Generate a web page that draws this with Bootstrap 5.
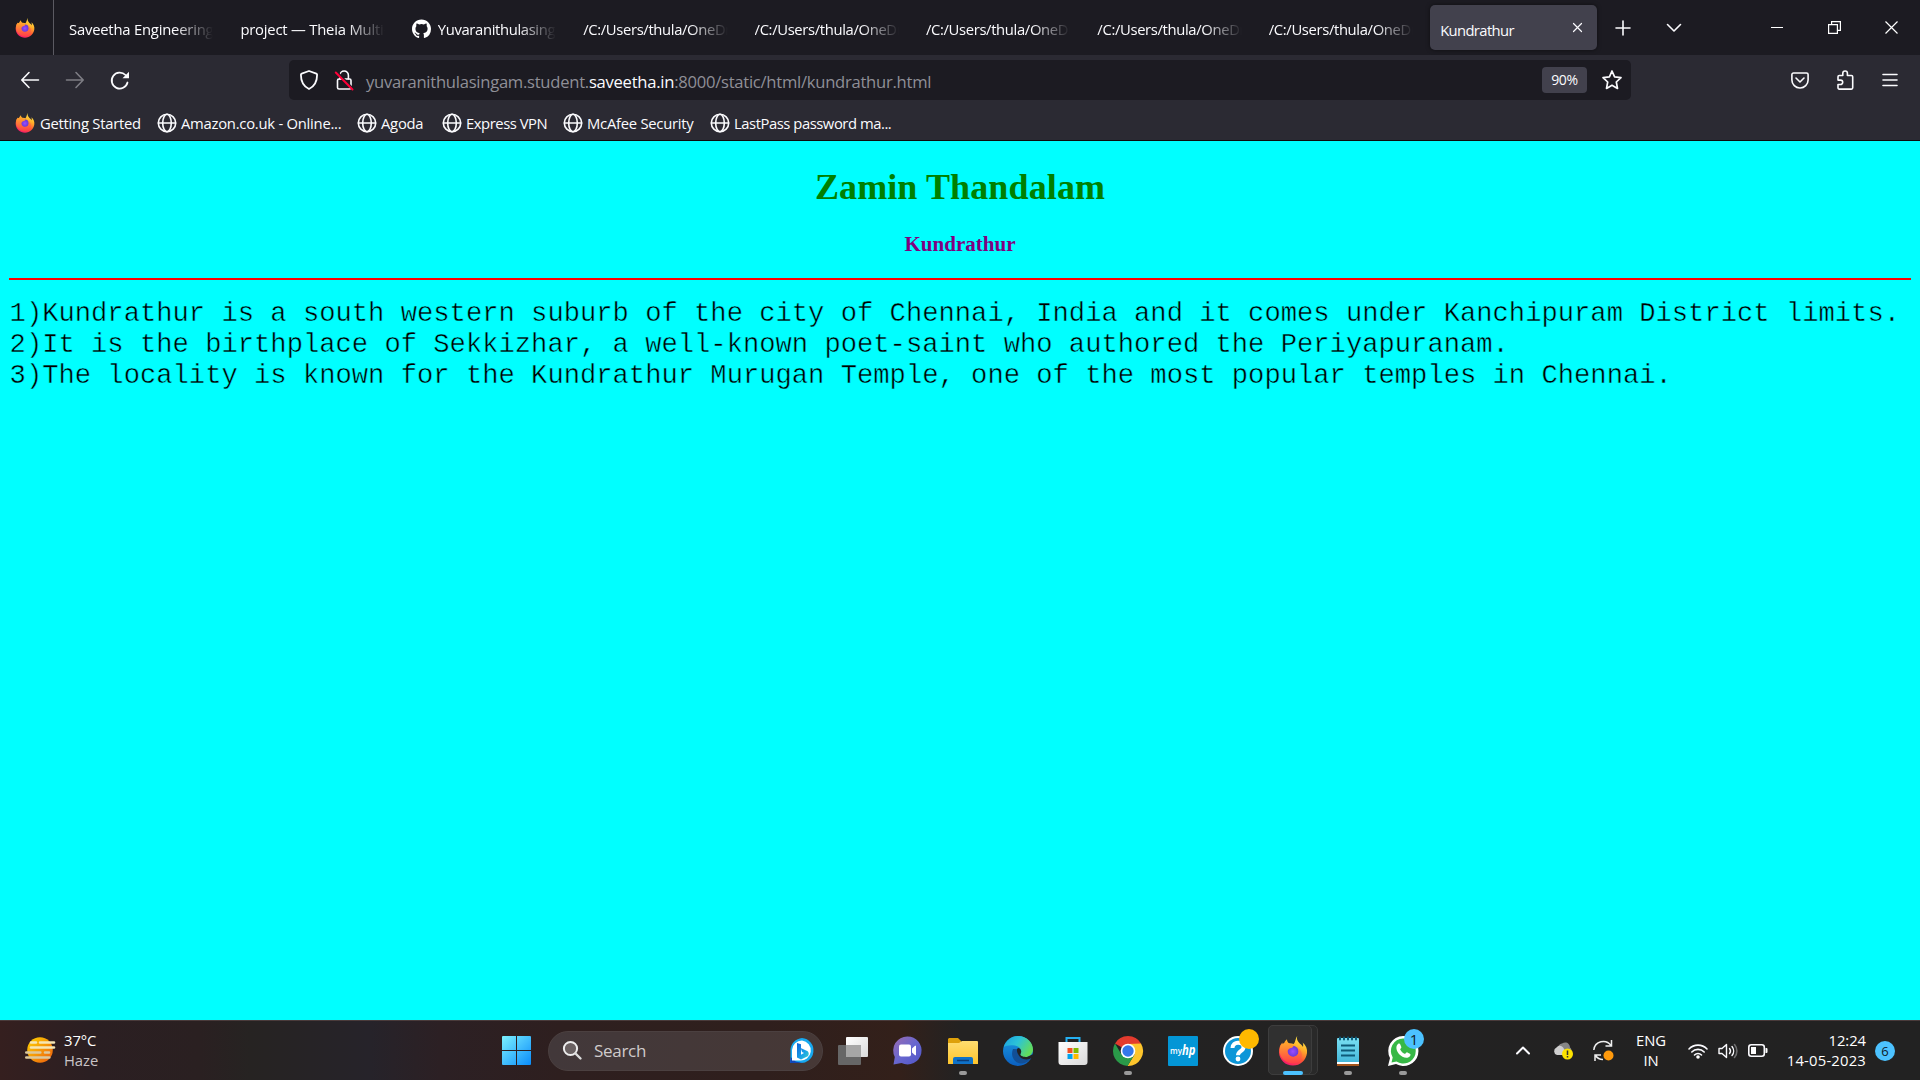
<!DOCTYPE html>
<html lang="en">
<head>
<meta charset="utf-8">
<title>Kundrathur</title>
<link href="https://cdn.jsdelivr.net/npm/bootstrap@5.3.0/dist/css/bootstrap.min.css" rel="stylesheet">
<style>
body{width:1920px;height:1080px;overflow:hidden;font-family:"Open Sans","Noto Sans",sans-serif;font-size:14.8px;line-height:20px;color:#fbfbfe}
svg{display:block;flex:none;overflow:visible}
.ln{fill:none;stroke:#fbfbfe;stroke-width:1.6;stroke-linecap:round;stroke-linejoin:round}
.tabstrip{height:55px;background:#1c1b22}
.pinned{width:54px;border-right:1px solid #5b5a62;padding-left:15px}
.tabs-row{padding-left:5px}
.tab-item{width:171.4px;padding:2px 17px 0 10px}
.tab-text{overflow:hidden;white-space:nowrap;letter-spacing:-.35px;-webkit-mask-image:linear-gradient(90deg,#000 calc(100% - 38px),transparent);mask-image:linear-gradient(90deg,#000 calc(100% - 38px),transparent)}
.tab-wide{letter-spacing:-.2px}
.tab-on{width:167px;height:45px;background:#42414d;border-radius:5px;padding:0 15px 0 10px;box-shadow:0 0 4px rgba(0,0,0,.5);letter-spacing:-.63px}
.toolbar{height:50px;background:#2b2a33}
.urlbar{width:1342px;height:40px;background:#1c1b22;border-radius:5px;padding:0 9px 0 11px}
.url{font-size:16.6px;color:#8f8f97;letter-spacing:-.26px;white-space:nowrap;padding-top:3px}
.url b{font-weight:400;color:#fbfbfe}
.zoomlvl{width:45px;height:26px;background:#42414d;border-radius:4px;font-size:14px;letter-spacing:-.3px;margin-right:2px}
.bookmarks{height:36px;background:#2b2a33;border-bottom:1px solid #0c0c0d;padding:1px 0 0 15px}
.bm{white-space:nowrap;letter-spacing:-.25px}
.bm-tight{letter-spacing:-.45px}
.page{height:879px;background:#0ff;color:#000;padding:0 9px;font-family:"Liberation Serif",serif}
.page h1{font-size:36px;line-height:42px;font-weight:700;color:green;margin:0;padding-top:25px;letter-spacing:.12px}
.page h3{font-size:21.06px;line-height:24px;font-weight:700;color:purple;margin:0;padding-top:24px}
.rule{height:2px;background:red;margin-top:22px}
.facts{font-family:"Liberation Mono",monospace;font-size:27.17px;line-height:31px;margin:18px 0 0 .6px;white-space:nowrap;-webkit-text-stroke:.45px #0ff}
.taskbar{height:60px;border-top:1px solid #4a3b3b;background:linear-gradient(90deg,#351f1f 0,#2b1f22 90px,#2a2021 200px,#262322 250px,#26232a 370px,#2c2024 440px,#2e1f1f 560px,#2f1f1d 760px,#33201a 900px,#232222 960px,#222 100%)}
.search{width:275px;height:40px;border-radius:20px;background:linear-gradient(90deg,#42383a,#463836);border:1px solid #4b4040;font-size:17px;letter-spacing:-.3px;color:#d0cbcb;padding:0 7px 0 14px}
.app{width:55px;height:59px}
.app::after{content:"";position:absolute;bottom:5px;width:8px;height:4px;border-radius:2px;background:transparent}
.run::after{background:#9a9a9a}
.live::after{width:20px;background:#4cc2ff}
.live-bg{left:3px;top:4px;width:50px;height:50px;border-radius:5px;background:#292929;border:1px solid #3a3a3a}
.live-fg{left:3px;top:4px;width:44px;height:50px;border-radius:5px;background:#303030;border:1px solid #3d3d3d}
.note{right:6px;top:8px;width:20px;height:20px;border-radius:50%;background:#4cc2ff;color:#10202a;font-size:15px}
.note-amber{background:#ffb900}
.task-text{font-size:14.8px;line-height:20px;letter-spacing:-.05px;color:#fff;margin-top:-2px}
.dimmed{color:#c9c4c6}
.myhp{font-family:"Open Sans",sans-serif;fill:#fff}
.alerts{width:20px;height:20px;background:#4cc2ff;color:#10202a;font-size:13px;margin:0 25px 0 9px}
</style>
</head>
<body class="d-flex flex-column">
<svg width="0" height="0" class="position-absolute">
<defs>
<linearGradient id="fxo" x1=".8" y1="0" x2=".3" y2="1"><stop offset="0" stop-color="#fff44f"/><stop offset=".35" stop-color="#ffb02a"/><stop offset=".65" stop-color="#ff5634"/><stop offset="1" stop-color="#f4156f"/></linearGradient>
<linearGradient id="fxl" x1="0" y1="0" x2="0" y2="1"><stop offset="0" stop-color="#ffa52c"/><stop offset="1" stop-color="#ff3d4a"/></linearGradient>
<radialGradient id="fxp"><stop offset="0" stop-color="#9a4dff"/><stop offset="1" stop-color="#6437d6"/></radialGradient>
<linearGradient id="win" gradientUnits="userSpaceOnUse" x1="0" y1="0" x2="29" y2="29"><stop offset="0" stop-color="#7cf1ff"/><stop offset="1" stop-color="#0a8cfa"/></linearGradient>
<linearGradient id="sun" x1="0" y1="0" x2="1" y2="1"><stop offset="0" stop-color="#ffd500"/><stop offset="1" stop-color="#ec5a0e"/></linearGradient>
<linearGradient id="chat" x1="0" y1="0" x2="1" y2="1"><stop offset="0" stop-color="#9b6bb0"/><stop offset=".5" stop-color="#6867cf"/><stop offset="1" stop-color="#4f55c8"/></linearGradient>
<linearGradient id="fold" x1="0" y1="0" x2="0" y2="1"><stop offset="0" stop-color="#ffdd70"/><stop offset="1" stop-color="#ffc52c"/></linearGradient>
<linearGradient id="edt" x1="0" y1="0" x2="1" y2=".5"><stop offset="0" stop-color="#1aa0e0"/><stop offset=".5" stop-color="#2cc3d8"/><stop offset="1" stop-color="#62dc5c"/></linearGradient>
<linearGradient id="edb" x1="0" y1="0" x2="0" y2="1"><stop offset="0" stop-color="#1b9de2"/><stop offset="1" stop-color="#0b5fc0"/></linearGradient>
<linearGradient id="tvw" x1="0" y1="0" x2="1" y2="1"><stop offset="0" stop-color="#fff"/><stop offset="1" stop-color="#dadada"/></linearGradient>
<linearGradient id="npd" x1="0" y1="0" x2="0" y2="1"><stop offset="0" stop-color="#79dff2"/><stop offset="1" stop-color="#3fb4d8"/></linearGradient>
<linearGradient id="bng" x1="0" y1="0" x2="1" y2="1"><stop offset="0" stop-color="#0d5fd8"/><stop offset=".6" stop-color="#19a4e8"/><stop offset="1" stop-color="#3fd0c0"/></linearGradient>
<symbol id="firefox" viewBox="0 0 30 30">
<path fill="url(#fxo)" d="M19.2 0c-1 3 .3 5 2.500 7.400C23.800 9 24.500 10 25 11c.4-1.700.2-3-.4-4.500C28 9 29.500 13 29 17c-.8 7.200-6.800 12.600-14 12.600C7.300 29.600 1.400 23.800 1 16.500.8 12.500 2.200 9 4.300 6.600c.1 1.200.4 2 .9 2.700C6.300 6.600 7 4.800 9 3.300c0 1.800.6 3 2 3.900 1.800-.2 3.500.2 4.700.8C17.500 6 17.500 2 19.200 0z"/>
<circle cx="14.800" cy="15.500" r="5.800" fill="url(#fxp)"/>
<path fill="url(#fxl)" d="M2.500 9.500C5 6.500 8.500 7 11 7.500l4.500 2.300c-.3 1.600-1.600 2.200-3.600 2.500l-2 1.800c-1 3.200 1.800 6.800 5.600 6.600 4.500-.3 6.300-4.500 4.300-8.600 3.500 2 5 6 3.500 9.800-1.600 4-6 6-10 5.500C7 26.500 2 21.500 1.700 16c0-2.500.1-4.900.8-6.500z"/>
</symbol>
<symbol id="globe" viewBox="0 0 20 20"><g class="ln"><circle cx="10" cy="10" r="8.700"/><ellipse cx="10" cy="10" rx="4.300" ry="8.700"/><path d="M1.500 10h17"/></g></symbol>
</defs>
</svg>

<header>
<div class="tabstrip d-flex align-items-center">
  <div class="pinned h-100 d-flex align-items-center"><svg width="20" height="20"><use href="#firefox"/></svg></div>
  <div class="tabs-row d-flex align-items-center">
    <div class="tab-item"><div class="tab-text tab-wide">Saveetha Engineering</div></div>
    <div class="tab-item"><div class="tab-text tab-wide">project — Theia Multi-</div></div>
    <div class="tab-item d-flex align-items-center"><svg width="19" height="20" style="margin-right:7px" viewBox="0 0 16 16"><path fill="#fff" d="M8 0C3.580 0 0 3.580 0 8c0 3.540 2.290 6.530 5.470 7.590.4.070.55-.17.55-.38 0-.19-.01-.82-.01-1.490-2.010.37-2.530-.49-2.690-.94-.09-.23-.48-.94-.82-1.130-.28-.15-.68-.52-.01-.53.63-.01 1.080.58 1.230.82.72 1.210 1.870.87 2.330.66.070-.52.28-.87.51-1.070-1.780-.2-3.640-.89-3.640-3.950 0-.87.31-1.590.82-2.150-.08-.2-.36-1.020.08-2.120 0 0 .67-.21 2.200.82a7.600 7.600 0 0 1 4 0c1.530-1.040 2.200-.82 2.200-.82.44 1.100.16 1.920.08 2.120.51.56.82 1.270.82 2.150 0 3.070-1.870 3.750-3.650 3.950.29.25.54.73.54 1.480 0 1.070-.01 1.930-.01 2.200 0 .21.15.46.55.38A8.010 8.010 0 0 0 16 8c0-4.420-3.580-8-8-8z"/></svg><div class="tab-text">Yuvaranithulasinga</div></div>
    <div class="tab-item"><div class="tab-text">/C:/Users/thula/OneDrive</div></div>
    <div class="tab-item"><div class="tab-text">/C:/Users/thula/OneDrive</div></div>
    <div class="tab-item"><div class="tab-text">/C:/Users/thula/OneDrive</div></div>
    <div class="tab-item"><div class="tab-text">/C:/Users/thula/OneDrive</div></div>
    <div class="tab-item"><div class="tab-text">/C:/Users/thula/OneDrive</div></div>
  </div>
  <div class="tab-on d-flex align-items-center justify-content-between"><span class="pt-1">Kundrathur</span><svg width="9" height="9"><path class="ln" style="stroke-width:1.200" d="M.5.500l8 8M8.500.500l-8 8"/></svg></div>
  <div class="d-flex align-items-center flex-fill" style="padding-left:18px">
    <svg width="16" height="16"><path class="ln" d="M8 1v14M1 8h14"/></svg>
    <svg style="margin-left:35px" width="16" height="16"><path class="ln" d="M1.500 4.500L8 11l6.500-6.500"/></svg>
    <svg class="ms-auto" width="12" height="12"><path stroke="#fff" d="M0 5.500h12"/></svg>
    <svg style="margin-left:45px" width="13" height="13"><path fill="none" stroke="#fff" stroke-width="1.200" d="M.6 3.600h8.800v8.800H.6zM3.600 3.600v-3h8.800v8.800h-3"/></svg>
    <svg style="margin:0 22px 0 44px" width="13" height="13"><path stroke="#fff" stroke-width="1.200" d="M.5.5l12 12M12.500.5l-12 12"/></svg>
  </div>
</div>
<div class="toolbar d-flex align-items-center">
  <svg style="margin-left:21px" width="18" height="18"><path class="ln" d="M17.500 9H1M8 1.500L.8 9 8 16.500"/></svg>
  <svg style="margin-left:27px" width="18" height="18" opacity=".4"><path class="ln" d="M.5 9H17M10 1.500L17.200 9 10 16.500"/></svg>
  <svg style="margin-left:27px" width="18" height="19"><path class="ln" style="stroke-width:1.800" d="M16.500 11.500A8 8 0 1 1 14.500 4"/><path fill="#fbfbfe" d="M18 .8v6.500h-6.500z"/></svg>
  <div class="urlbar d-flex align-items-center" style="margin-left:160px">
    <svg width="18" height="20"><path class="ln" style="stroke-width:1.800" d="M9 1l7.300 2.600c.6.200.8.600.8 1.100 0 6-2.800 11.700-8.100 14.300C3.700 16.400.9 10.700.9 4.700c0-.5.2-.9.800-1.100z"/></svg>
    <svg style="margin-left:17px" width="18" height="20"><rect class="ln" x="2.500" y="9" width="13.500" height="10" rx="1.500"/><path class="ln" d="M5 9V5.200a4.200 4.200 0 0 1 8.400 0V9"/><path stroke="#1c1b22" stroke-width="2.500" d="M1.500 1.500L18 19"/><path stroke="#ff0039" stroke-width="2" stroke-linecap="round" d="M.8 2.500L17.500 19.500"/></svg>
    <div class="url" style="margin-left:13px">yuvaranithulasingam.student.<b>saveetha.in</b>:8000/static/html/kundrathur.html</div>
    <div class="zoomlvl ms-auto d-flex align-items-center justify-content-center">90%</div>
    <svg style="margin-left:13px" width="20" height="20"><path class="ln" style="stroke-width:1.700" d="M10 1l2.600 5.800 6.400.8-4.700 4.400 1.200 6.400L10 15.300l-5.500 3.100L5.700 12 1 7.600l6.400-.8z"/></svg>
  </div>
  <svg style="margin-left:160px" width="18" height="17"><path class="ln" d="M2.500 1h13a1.600 1.600 0 0 1 1.600 1.600V8A8 8 0 0 1 9 16 8 8 0 0 1 .9 8V2.600A1.600 1.600 0 0 1 2.500 1zM5 6l4 4 4-4"/></svg>
  <svg style="margin-left:28px" width="17" height="20"><path class="ln" d="M1 8.500V6.800C1 6 1.500 5.500 2.300 5.500h3.500V3.300a2.300 2.300 0 0 1 4.600 0v2.200h4c.8 0 1.300.5 1.300 1.300v11c0 .8-.5 1.300-1.300 1.300H2.300C1.500 19.100 1 18.600 1 17.800v-3.300h2.500a2.200 2.200 0 0 0 0-4.400H1z"/></svg>
  <svg style="margin-left:28px" width="16" height="14"><path class="ln" d="M1 1.500h14M1 7h14M1 12.500h14"/></svg>
</div>
<nav class="bookmarks d-flex align-items-center">
  <div class="bm d-flex align-items-center" style="width:142px"><svg width="20" height="20" style="margin-right:5px"><use href="#firefox"/></svg><span>Getting Started</span></div>
  <div class="bm d-flex align-items-center" style="width:200px"><svg width="20" height="20" style="margin-right:4px"><use href="#globe"/></svg><span>Amazon.co.uk - Online...</span></div>
  <div class="bm d-flex align-items-center" style="width:85px"><svg width="20" height="20" style="margin-right:4px"><use href="#globe"/></svg><span>Agoda</span></div>
  <div class="bm bm-tight d-flex align-items-center" style="width:121px"><svg width="20" height="20" style="margin-right:4px"><use href="#globe"/></svg><span>Express VPN</span></div>
  <div class="bm d-flex align-items-center" style="width:147px"><svg width="20" height="20" style="margin-right:4px"><use href="#globe"/></svg><span>McAfee Security</span></div>
  <div class="bm bm-tight d-flex align-items-center"><svg width="20" height="20" style="margin-right:4px"><use href="#globe"/></svg><span>LastPass password ma...</span></div>
</nav>
</header>

<main class="page">
  <h1 class="text-center">Zamin Thandalam</h1>
  <h3 class="text-center">Kundrathur</h3>
  <div class="rule"></div>
  <p class="facts">1)Kundrathur is a south western suburb of the city of Chennai, India and it comes under Kanchipuram District limits.<br>2)It is the birthplace of Sekkizhar, a well-known poet-saint who authored the Periyapuranam.<br>3)The locality is known for the Kundrathur Murugan Temple, one of the most popular temples in Chennai.</p>
</main>

<footer class="taskbar d-flex align-items-center">
  <div class="d-flex align-items-center" style="width:502px;padding-left:25px">
    <svg width="30" height="28"><circle cx="15" cy="13" r="12.800" fill="url(#sun)"/><g stroke="#f6e6b4" stroke-width="2.600" stroke-linecap="round"><path d="M6 5.500h5M15 5.500h14M6 10.500h23"/><path stroke="#dcc89c" d="M1.300 15.500h14M20 15.500h4M1.300 20.500h23"/></g></svg>
    <div class="task-text" style="margin-left:9px"><div>37°C</div><div class="dimmed">Haze</div></div>
  </div>
  <svg width="29" height="29"><path fill="url(#win)" d="M1 0h13v14H0V1a1 1 0 0 1 1-1zM15 0h13a1 1 0 0 1 1 1v13H15zM0 15h14v14H1a1 1 0 0 1-1-1zM15 15h14v13a1 1 0 0 1-1 1H15z"/></svg>
  <div class="search d-flex align-items-center" style="margin-left:17px">
    <svg width="19" height="19"><circle cx="7.500" cy="7.500" r="6.600" fill="#6a6162" stroke="#eee" stroke-width="2"/><path d="M12.500 12.500l5 5" stroke="#ddd" stroke-width="2.400" stroke-linecap="round"/></svg>
    <span style="margin-left:12px">Search</span>
    <svg class="ms-auto" width="26" height="26"><path fill="#17a9f0" d="M13 0a12.500 12.500 0 1 1-3 24.800L1 25l.5-5V12A12.500 12.500 0 0 1 13 0z"/><path fill="#1046b8" d="M1 25l.7-6 5 4.500 7 1.500z"/><path fill="#fff" d="M13 2.500a10 10 0 1 1-2.500 20L3 22.500V12A10 10 0 0 1 13 2.500z"/><path fill="url(#bng)" d="M8 5l4 1.300v10.500l3-1.800-2-1-1.300-4 7 3.300c1.500 1.200 1.300 4 0 5L12 21.500 8 19.500z"/></svg>
  </div>
  <div class="d-flex" style="margin-left:2px">
    <div class="app position-relative d-flex align-items-center justify-content-center"><svg width="30" height="28"><rect y="8" width="23" height="20" rx="1" fill="#666"/><rect x="8" width="22" height="20" rx="1" fill="url(#tvw)"/><path fill="#a6a6a6" d="M8 8h15v12H8z"/></svg></div>
    <div class="app position-relative d-flex align-items-center justify-content-center"><svg width="29" height="29"><path fill="url(#chat)" d="M14.500.5a14 14 0 1 1-6 26.600L.5 28.500l1.300-7.500A14 14 0 0 1 14.500.5z"/><rect x="6" y="8.500" width="12" height="12" rx="2" fill="#fff"/><path fill="#fff" d="M19 12.500l3-2.700h1v9.500h-1l-3-2.700z"/></svg></div>
    <div class="app run position-relative d-flex align-items-center justify-content-center"><svg width="30" height="28"><path fill="#dea10a" d="M1 1h9l3 3v5H0V2z"/><path fill="url(#fold)" d="M0 6h11l3-2h15a1 1 0 0 1 1 1v22H0z"/><path fill="#0f72c8" d="M5 27v-5a2 2 0 0 1 2-2h16a2 2 0 0 1 2 2v5z"/><path stroke="#0a3c78" stroke-width="1.500" d="M9 23.500h12"/></svg></div>
    <div class="app position-relative d-flex align-items-center justify-content-center"><svg width="30" height="30"><circle cx="15" cy="15" r="15" fill="url(#edb)"/><path fill="url(#edt)" d="M.8 11C3 4 9 0 15 0c9 0 15 6.500 15 13.500 0 5-4 7.500-7.500 7.500-4 0-6-1.500-5-3.200 1.500-2.800.5-7.300-5.500-8.300C7 8.700 3 9.500.8 11z"/><path fill="#124f96" d="M10 13c-3 7 1.500 15 9.500 14.500 4-.5 7-3 8.500-5.500-3 1.500-8 1.500-11-1.500-2-2-2-5 0-7z"/><path fill="#232222" d="M15.500 12c2.500.5 3.500 3.500 2 6-.8 1.500 3 3 6.500 3l6.500-3-1.300 3.800c-4 2.400-9 2-12-.6-3-2.700-4.700-8.700-1.700-9.200z"/></svg></div>
    <div class="app position-relative d-flex align-items-center justify-content-center"><svg width="30" height="30"><path fill="none" stroke="#25b0f2" stroke-width="2" d="M8.500 6V2h13v4"/><path fill="url(#tvw)" d="M.5 6h29v20a3 3 0 0 1-3 3h-23a3 3 0 0 1-3-3z"/><path fill="#f25022" d="M9.500 12h5v5h-5z"/><path fill="#7fba00" d="M15.500 12h5v5h-5z"/><path fill="#00a4ef" d="M9.500 18h5v5h-5z"/><path fill="#ffb900" d="M15.500 18h5v5h-5z"/></svg></div>
    <div class="app run position-relative d-flex align-items-center justify-content-center"><svg width="30" height="30"><path fill="#e33b2e" d="M2 7.500A15 15 0 0 1 28 7.500L15 15z"/><path fill="#fdc52c" d="M28 7.500A15 15 0 0 1 14.500 30L21.500 18.500 15 8z"/><path fill="#2a9a49" d="M2 7.500A15 15 0 0 0 14.500 30l7-11.500L15 22l-6.500-3.500z"/><circle cx="15" cy="15" r="7.300" fill="#fff"/><circle cx="15" cy="15" r="5.700" fill="#3478ea"/></svg></div>
    <div class="app position-relative d-flex align-items-center justify-content-center"><svg width="30" height="30"><rect width="30" height="30" rx="1" fill="#0396d6"/><text class="myhp" x="2" y="18" font-size="9.500" font-weight="600" textLength="12" lengthAdjust="spacingAndGlyphs">my</text><text class="myhp" x="14" y="19" font-size="15" font-style="italic" font-weight="700" textLength="13.500" lengthAdjust="spacingAndGlyphs">hp</text></svg></div>
    <div class="app position-relative d-flex align-items-center justify-content-center"><svg width="30" height="30"><circle cx="15" cy="15" r="15" fill="#fff"/><circle cx="15" cy="15" r="13" fill="#0c96d8"/><path fill="none" stroke="#fff" stroke-width="4" d="M9.500 12c0-7 11-7 11-.8 0 4-5.500 4-5.500 8"/><circle cx="15" cy="23" r="2.400" fill="#fff"/></svg><span class="note note-amber position-absolute"></span></div>
    <div class="app live position-relative d-flex align-items-center justify-content-center"><span class="live-bg position-absolute"></span><span class="live-fg position-absolute"></span><svg class="position-relative" width="30" height="30"><use href="#firefox"/></svg></div>
    <div class="app run position-relative d-flex align-items-center justify-content-center"><svg width="22" height="30"><rect y="2" width="22" height="27" rx="1" fill="url(#npd)"/><path fill="#fff" d="M0 26h22v2H0z"/><path fill="#a4551c" d="M0 28h22v2H0z"/><g stroke="#0e5a78" stroke-width="2"><path d="M4 9.500h14M4 14.500h14M4 19.500h14"/><path stroke-linecap="round" d="M3 1.500v2M7 1.500v2M11 1.500v2M15 1.500v2M19 1.500v2"/></g></svg></div>
    <div class="app run position-relative d-flex align-items-center justify-content-center"><svg width="30" height="30"><path fill="#fff" d="M15 0a15 15 0 1 1-7 28L0 30l2-8A15 15 0 0 1 15 0z"/><path fill="#37b846" d="M15 2.500a12.500 12.500 0 1 1-6.500 23L3.500 26.500l1.200-5A12.500 12.500 0 0 1 15 2.500z"/><path fill="#fff" d="M10 8c1-.8 2-.4 2.300.4l1 2.500c.3 1-.8 1.600-1.200 2.300 1 2.300 2.800 3.800 5 4.700.8-.6 1.300-1.900 2.300-1.500l2.500 1.300c1 .5.600 2-.2 2.800-3 2.800-8 .3-10.500-2.300S7 10.500 10 8z"/></svg><span class="note position-absolute d-flex align-items-center justify-content-center">1</span></div>
  </div>
  <div class="d-flex align-items-center ms-auto">
    <svg width="14" height="9"><path class="ln" style="stroke-width:2" d="M1 7.500l6-6 6 6"/></svg>
    <svg style="margin-left:23px" width="20" height="18"><path fill="#858585" d="M8 11a5 5 0 0 1 1-9.500c4-2.500 8 0 8 4 2 1 2 5-1 5.500z"/><path fill="#cfcfcf" d="M4 13a4 4 0 0 1-.5-7.500C6 2 10 4 11 7l3 6z"/><circle cx="14.500" cy="12" r="5.500" fill="#fde300"/><path stroke="#333" stroke-width="1.500" d="M14.500 8.500v4.500M14.500 14v1.500"/></svg>
    <svg style="margin-left:20px" width="21" height="21"><path fill="none" stroke="#eee" stroke-width="1.500" d="M.8 10A9.500 9.500 0 0 1 18 5.500M18.500 0v6h-6M2 21v-6h6M2.500 15.500A9 9 0 0 0 10 19.500"/><circle cx="15.500" cy="15.500" r="5" fill="#ff9a0c"/></svg>
    <div class="task-text text-center" style="width:74px"><div>ENG</div><div>IN</div></div>
    <svg width="20" height="16"><g class="ln"><path d="M1 6a12.500 12.500 0 0 1 18 0M3.800 9a8.700 8.700 0 0 1 12.400 0M6.500 12a5 5 0 0 1 7 0"/></g><circle cx="10" cy="14" r="1.800" fill="#fff"/></svg>
    <svg style="margin-left:10px" width="20" height="16"><path class="ln" style="stroke-width:1.400" d="M1 5.500h3l4.500-4v13L4 10.500H1zM11.500 5.500a4 4 0 0 1 0 5M14 3.500a7 7 0 0 1 0 9"/><path class="ln" opacity=".35" d="M16.500 1.500a10 10 0 0 1 0 13"/></svg>
    <svg style="margin-left:10px" width="20" height="13"><rect class="ln" x=".8" y=".8" width="15.500" height="11.400" rx="2.500"/><path fill="#fff" d="M3 3h5v7H3zM17.500 4h1a1 1 0 0 1 1 1v3a1 1 0 0 1-1 1h-1z"/></svg>
    <div class="task-text text-end" style="width:98px"><div>12:24</div><div style="letter-spacing:.2px">14-05-2023</div></div>
    <span class="alerts rounded-circle d-flex align-items-center justify-content-center">6</span>
  </div>
</footer>
<script src="https://cdn.jsdelivr.net/npm/bootstrap@5.3.0/dist/js/bootstrap.bundle.min.js"></script>
</body>
</html>
